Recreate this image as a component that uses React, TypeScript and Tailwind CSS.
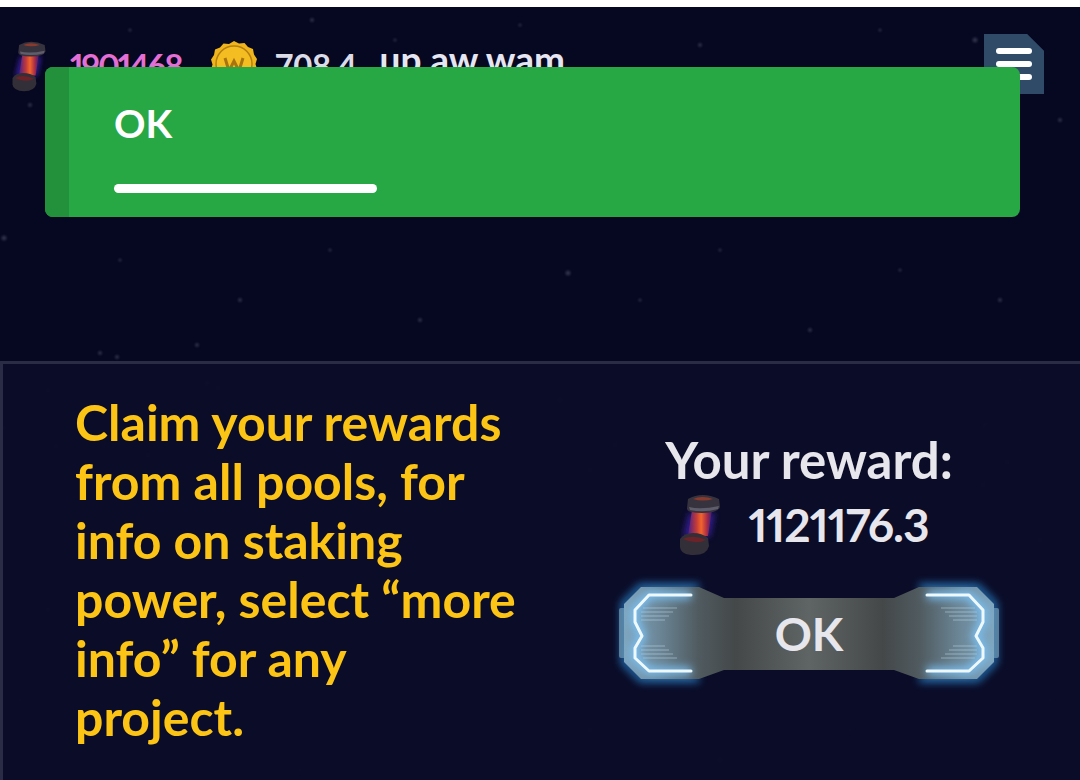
import { useId } from 'react';

const stars = [
  [24, 60, 2], [130, 30, 1.5], [312, 20, 2], [395, 40, 1.5], [520, 25, 1.5], [700, 45, 2], [880, 30, 1.5], [975, 40, 2.5],
  [1060, 120, 2], [30, 105, 2], [4, 238, 2.5], [120, 260, 1.5], [240, 300, 2], [330, 250, 1.5], [420, 320, 2],
  [568, 273, 2.5], [640, 300, 1.5], [720, 250, 1.5], [810, 330, 2], [900, 270, 1.5], [1000, 300, 2], [100, 353, 2],
  [117, 357, 2], [197, 345, 2], [48, 390, 2], [3, 428, 2.5], [56, 447, 2], [207, 383, 2.5], [218, 388, 2],
  [148, 455, 2], [30, 520, 1.5], [48, 610, 2], [20, 700, 1.5], [560, 400, 2], [590, 470, 2], [615, 445, 2],
  [630, 540, 1.5], [655, 620, 1.5], [985, 425, 2], [1007, 462, 2], [983, 485, 2], [920, 480, 1.5], [1040, 540, 2],
  [1050, 700, 1.5], [560, 600, 1.5], [590, 730, 2], [850, 730, 1.5], [720, 760, 2], [300, 770, 1.5], [1020, 380, 1.5],
];

function StarField() {
  return (
    <svg className="absolute inset-0 h-full w-full blur-[1px]" width="1080" height="780">
      {stars.map(([x, y, r], i) => (
        <circle key={i} cx={x} cy={y} r={r} fill="#8a8ca8" opacity={0.3} />
      ))}
    </svg>
  );
}

function Capsule({ className }: { className: string }) {
  const id = useId();
  const core = `${id}-core`;
  const blur = `${id}-blur`;
  return (
    <svg viewBox="0 0 42 63" className={className}>
      <defs>
        <linearGradient id={core} x1="0" x2="1" y1="0" y2="0">
          <stop offset="0" stopColor="#4a1f86" />
          <stop offset="0.35" stopColor="#c23a3a" />
          <stop offset="0.55" stopColor="#f2652c" />
          <stop offset="0.8" stopColor="#a52a48" />
          <stop offset="1" stopColor="#3c1c78" />
        </linearGradient>
        <filter id={blur} x="-50%" y="-50%" width="200%" height="200%">
          <feGaussianBlur stdDeviation="3" />
        </filter>
      </defs>
      <path d="M10 20h26l-5 24H4z" fill="#3a22a8" opacity="0.8" filter={`url(#${blur})`} />
      <path d="M13 17h20l-4 26H9z" fill={`url(#${core})`} />
      <path d="M9 6q14-8 31 0l1 8q-2 6-18 6t-15-5z" fill="#37333e" />
      <path d="M14 6q9-4 20 0q-10 3-20 0z" fill="#8a3a2c" />
      <path d="M10 14q12 3 30-1l-1 3q-14 4-28 1z" fill="#5f5d6b" />
      <path d="M1 46q4-6 13-6t15 5l1 8q-2 9-15 9t-14-8z" fill="#332f38" />
      <path d="M4 46q10-5 23 1q-10 5-23-1z" fill="#6b2329" />
    </svg>
  );
}

function Coin() {
  return (
    <svg viewBox="0 0 48 48" className="h-12 w-12">
      <path
        d="M24 1l5 2.500 5.500-.5 3.500 4 5 2 1 5.500 3 4.500-1.500 5 1.500 5-3.500 4.500-1 5-5 2.500-3.500 4-5.500-.5-5 2.500-5-2.500-5.500.5-3.500-4-5-2.500-1-5L1 29.500 2.500 24.500 1 19.500l3-4.500 1-5.500 5-2 3.500-4 5.500.5z"
        fill="#f0b41c"
      />
      <circle cx="24" cy="24" r="18" fill="#f4bd22" stroke="#b47f12" strokeWidth="1.500" />
      <path d="M15 18l4 13 5-10 5 10 4-13" fill="none" stroke="#a8740f" strokeWidth="3" />
    </svg>
  );
}

function Hamburger() {
  return (
    <div className="flex h-[60px] w-[60px] flex-col items-center justify-center gap-[7px] bg-[#2f4b68] [clip-path:polygon(0_0,72%_0,100%_28%,100%_100%,0_100%)]">
      <span className="h-[6px] w-9 rounded-full bg-white" />
      <span className="h-[6px] w-9 rounded-full bg-white" />
      <span className="h-[6px] w-9 rounded-full bg-white" />
    </div>
  );
}

function OkButton() {
  return (
    <div className="relative flex h-[98px] w-[380px] items-center justify-center">
      <svg viewBox="0 0 380 98" className="absolute inset-0 h-full w-full overflow-visible">
        <defs>
          <linearGradient id="okFill" x1="0" x2="1" y1="0" y2="0">
            <stop offset="0" stopColor="#7fa6bf" />
            <stop offset="0.1" stopColor="#6a8494" />
            <stop offset="0.2" stopColor="#505b60" />
            <stop offset="0.3" stopColor="#444849" />
            <stop offset="0.5" stopColor="#5f6465" />
            <stop offset="0.7" stopColor="#444849" />
            <stop offset="0.8" stopColor="#505b60" />
            <stop offset="0.9" stopColor="#6a8494" />
            <stop offset="1" stopColor="#7fa6bf" />
          </linearGradient>
          <filter id="okGlow" x="-20%" y="-40%" width="140%" height="180%">
            <feGaussianBlur stdDeviation="4" />
          </filter>
        </defs>
        <rect x="0" y="24" width="8" height="50" rx="2" fill="#6b7278" />
        <rect x="372" y="24" width="8" height="50" rx="2" fill="#6b7278" />
        <g fill="none" stroke="#2f9cf0" strokeWidth="6" filter="url(#okGlow)" opacity="0.8">
          <path d="M80 3H22L5 20v58l17 17h58" />
          <path d="M300 3h58l17 17v58l-17 17h-58" />
        </g>
        <path d="M22 3h58l25 11h170l25-11h58l17 17v58l-17 17h-58l-25-9H105l-25 9H22L5 78V20z" fill="url(#okFill)" />
        <g stroke="#cfe6f5" strokeWidth="1" opacity="0.45">
          <path d="M24 24h34M22 28h32M22 32h28M22 36h24M22 62h24M22 66h28M22 70h32M24 74h34" />
          <path d="M322 24h34M326 28h32M330 32h28M334 36h24M334 62h24M330 66h28M326 70h32M322 74h34" />
        </g>
        <g fill="none" stroke="#7cc8ff" strokeWidth="7" filter="url(#okGlow)">
          <path d="M72 11H30L16 26v12l7 14-7 12v10l14 13h42" />
          <path d="M308 11h42l14 15v12l-7 14 7 12v10l-14 13h-42" />
        </g>
        <g fill="none" stroke="#eef9ff" strokeWidth="3" strokeLinecap="round" strokeLinejoin="round">
          <path d="M72 11H30L16 26v12l7 14-7 12v10l14 13h42" />
          <path d="M308 11h42l14 15v12l-7 14 7 12v10l-14 13h-42" />
        </g>
      </svg>
      <span className="relative mt-[2px] text-[46px] leading-none font-bold text-[#e6e6ec]">OK</span>
    </div>
  );
}

export default function App() {
  return (
    <div className="relative h-[780px] w-[1080px] overflow-hidden bg-[#060720] font-['Lato',sans-serif]">
      <StarField />
      <div className="relative h-[7px] bg-white" />

      <div className="relative flex h-[354px] items-start pt-[27px] pr-[36px] pl-[11px]">
        <div className="mt-[6px]">
          <Capsule className="h-[52px] w-[36px]" />
        </div>
        <span className="mt-[11px] ml-[23px] text-[33px] leading-[40px] font-bold tracking-[-2px] text-[#e46fd4] proportional-nums">
          1901468
        </span>
        <div className="mt-[6px] ml-[28px]">
          <Coin />
        </div>
        <span className="mt-[11px] ml-[17px] text-[33px] leading-[40px] font-bold tracking-[-0.5px] text-[#dcdce8]">
          708.4
        </span>
        <span className="mt-[5px] ml-[23px] text-[37px] leading-[40px] font-bold text-[#e6e6f2]">up.aw.wam</span>
        <div className="ml-auto">
          <Hamburger />
        </div>
      </div>

      <div className="relative flex h-[419px] border-t-[3px] border-l-[3px] border-[#2a2b45] bg-[#0c0d28]/95 pt-[29px]">
        <p className="ml-[72px] w-[470px] text-[50px] leading-[59px] font-bold text-[#fcc516]">
          Claim your rewards
          <br />
          from all pools, for
          <br />
          info on staking
          <br />
          power, select “more
          <br />
          info” for any
          <br />
          project.
        </p>
        <div className="ml-[74px] flex w-[380px] flex-col items-center">
          <span className="mt-[37px] text-[51px] leading-[59px] font-bold text-[#e6e6ec]">Your reward:</span>
          <div className="mt-[4px] mr-[10px] flex items-center">
            <Capsule className="mr-[27px] h-[63px] w-[42px]" />
            <span className="text-[46px] leading-[59px] font-bold tracking-[-1px] text-[#e6e6ec] proportional-nums">
              1121176.3
            </span>
          </div>
          <div className="mt-[28px]">
            <OkButton />
          </div>
        </div>
      </div>

      <div className="absolute top-[67px] left-[45px] flex h-[150px] w-[975px] overflow-hidden rounded-lg bg-[#28a745]">
        <div className="h-full w-[24px] bg-[#23903c]" />
        <div className="ml-[45px] flex flex-col">
          <span className="mt-[31px] text-[39px] leading-[50px] font-bold text-white">OK</span>
          <span className="mt-[36px] h-[9px] w-[263px] rounded-full bg-white" />
        </div>
      </div>
    </div>
  );
}
